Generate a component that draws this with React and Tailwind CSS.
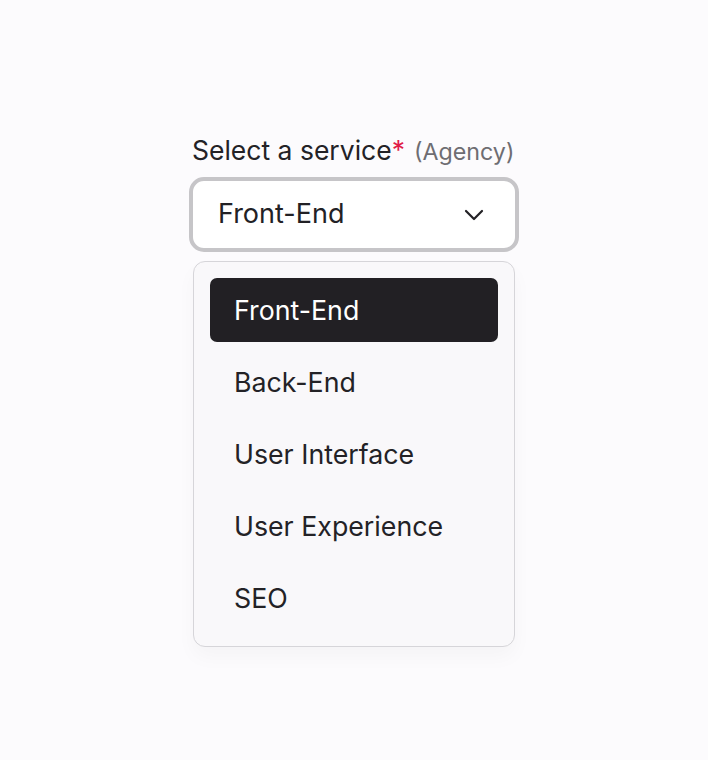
import React from "react";

const items = ["Front-End", "Back-End", "User Interface", "User Experience", "SEO"];

export default function App() {
  return (
    <div className="min-h-[760px] w-full bg-[#fcfbfd] flex justify-center pt-[132px]" style={{ fontFamily: "Inter, 'Noto Sans', sans-serif" }}>
      <div className="w-[330px] flex flex-col">
        <div className="pl-[3px] h-[38px] flex items-center text-[26.5px] text-[#232226]">
          <span>Select a service</span>
          <span className="text-[#e11d48]">*</span>
          <span className="ml-[9px] text-[23.25px] text-[#6e6d72] mt-[2px]">(Agency)</span>
        </div>
        <div className="mt-[7px] h-[75px] rounded-[15px] border-4 border-[#c6c5c8] bg-white flex items-center justify-between pl-[25px] pr-[31px]">
          <span className="text-[27px] text-[#222125]">Front-End</span>
          <svg width="20" height="12" viewBox="0 0 20 12" fill="none" stroke="#222125" strokeWidth="2.2" strokeLinecap="round" strokeLinejoin="round">
            <path d="M2 2l8 8 8-8" />
          </svg>
        </div>
        <div className="mt-[9px] mx-[4px] rounded-[12px] border border-[#d6d5d9] bg-[#f9f8fa] p-[16px] flex flex-col gap-[8px] shadow-[0_10px_20px_rgba(0,0,0,0.03)]">
          {items.map((it, i) => (
            <div
              key={it}
              className={
                i === 0
                  ? "h-[64px] rounded-[7px] bg-[#222024] text-white flex items-center pl-[24px] text-[26.75px]"
                  : "h-[64px] rounded-[7px] text-[#232226] flex items-center pl-[24px] text-[26.75px]"
              }
            >
              {it}
            </div>
          ))}
        </div>
      </div>
    </div>
  );
}
